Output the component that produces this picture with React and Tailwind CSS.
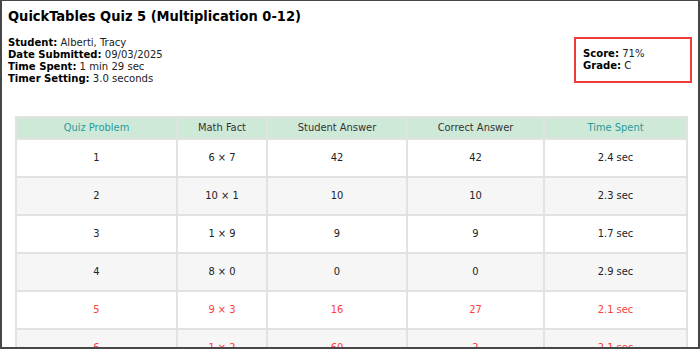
import React from "react";

const rows = [
  { n: 1, f: "6 × 7", s: "42", c: "42", t: "2.4 sec", wrong: false },
  { n: 2, f: "10 × 1", s: "10", c: "10", t: "2.3 sec", wrong: false },
  { n: 3, f: "1 × 9", s: "9", c: "9", t: "1.7 sec", wrong: false },
  { n: 4, f: "8 × 0", s: "0", c: "0", t: "2.9 sec", wrong: false },
  { n: 5, f: "9 × 3", s: "16", c: "27", t: "2.1 sec", wrong: true },
  { n: 6, f: "1 × 2", s: "60", c: "2", t: "2.1 sec", wrong: true },
  { n: 7, f: "4 × 4", s: "16", c: "16", t: "1.9 sec", wrong: false },
];

export default function App() {
  return (
    <div
      className="h-[349px] w-[700px] overflow-hidden border-x-2 border-b-2 border-t border-[#474747] bg-white px-[6px] pt-[5px] text-[#222]"
      style={{ fontFamily: '"DejaVu Sans", Verdana, sans-serif', fontStretch: "condensed" }}
    >
      <h1 className="text-[14.5px] font-bold leading-[20px] text-black">
        QuickTables Quiz 5 (Multiplication 0-12)
      </h1>
      <div className="mt-[11px] flex items-start justify-between">
        <div className="text-[11.2px] leading-[12px]">
          <div><b className="text-black">Student:</b> Alberti, Tracy</div>
          <div><b className="text-black">Date Submitted:</b> 09/03/2025</div>
          <div><b className="text-black">Time Spent:</b> 1 min 29 sec</div>
          <div><b className="text-black">Timer Setting:</b> 3.0 seconds</div>
        </div>
        <div className="w-[118px] border-2 border-[#f03a3a] px-[7px] py-[9px] text-[11.2px] leading-[12px]">
          <div><b className="text-black">Score:</b> 71%</div>
          <div><b className="text-black">Grade:</b> C</div>
        </div>
      </div>
      <table className="ml-[7px] mt-[31px] w-[673px] table-fixed border-collapse border-2 border-[#dedede] text-center text-[11px]">
        <colgroup>
          <col className="w-[161px]" />
          <col className="w-[90px]" />
          <col className="w-[140px]" />
          <col className="w-[137px]" />
          <col />
        </colgroup>
        <thead>
          <tr className="h-[22px] bg-[#cfe9d8]">
            <th className="border-2 border-[#e2e2e2] font-normal text-[#2a9a9a]">Quiz Problem</th>
            <th className="border-2 border-[#e2e2e2] font-normal text-[#333]">Math Fact</th>
            <th className="border-2 border-[#e2e2e2] font-normal text-[#333]">Student Answer</th>
            <th className="border-2 border-[#e2e2e2] font-normal text-[#333]">Correct Answer</th>
            <th className="border-2 border-[#e2e2e2] font-normal text-[#2a9a9a]">Time Spent</th>
          </tr>
        </thead>
        <tbody>
          {rows.map((r, i) => (
            <tr
              key={r.n}
              className={`h-[38px] ${i % 2 === 1 ? "bg-[#f6f6f6]" : "bg-white"} ${r.wrong ? "text-[#ff3b3b]" : "text-[#222]"}`}
            >
              <td className="border-2 border-[#e2e2e2]">{r.n}</td>
              <td className="border-2 border-[#e2e2e2]">{r.f}</td>
              <td className="border-2 border-[#e2e2e2]">{r.s}</td>
              <td className="border-2 border-[#e2e2e2]">{r.c}</td>
              <td className="border-2 border-[#e2e2e2]">{r.t}</td>
            </tr>
          ))}
        </tbody>
      </table>
    </div>
  );
}
